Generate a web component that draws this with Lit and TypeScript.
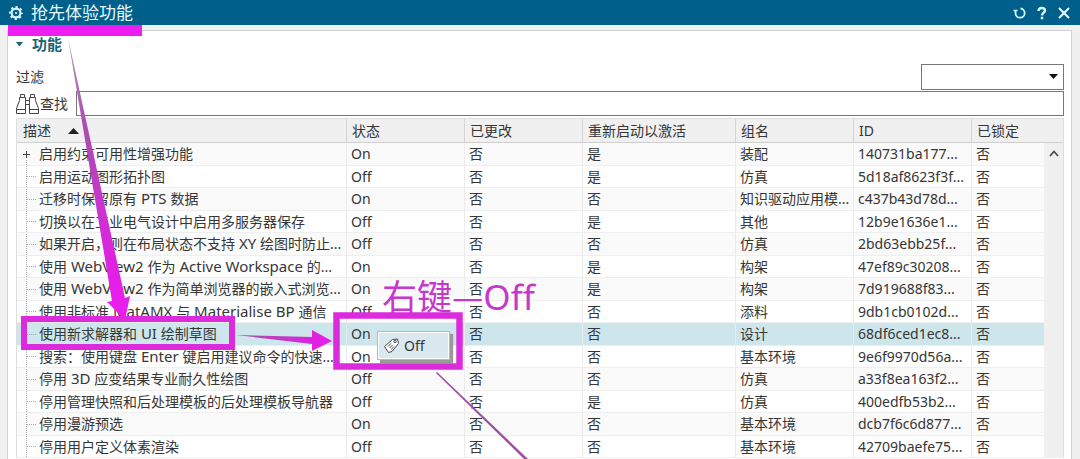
import { LitElement, html, svg, css } from "lit";
import { customElement } from "lit/decorators.js";

type Row = [string, string, string, string, string, string, string];

const HEADERS = ["描述", "状态", "已更改", "重新启动以激活", "组名", "ID", "已锁定"];
const ROWS: Row[] = [
  ["启用约束可用性增强功能", "On", "否", "是", "装配", "140731ba177...", "否"],
  ["启用运动图形拓扑图", "Off", "否", "是", "仿真", "5d18af8623f3f...", "否"],
  ["迁移时保留原有 PTS 数据", "On", "否", "否", "知识驱动应用模...", "c437b43d78d...", "否"],
  ["切换以在工业电气设计中启用多服务器保存", "Off", "否", "是", "其他", "12b9e1636e1...", "否"],
  ["如果开启，则在布局状态不支持 XY 绘图时防止...", "Off", "否", "否", "仿真", "2bd63ebb25f...", "否"],
  ["使用 WebView2 作为 Active Workspace 的...", "On", "否", "是", "构架", "47ef89c30208...", "否"],
  ["使用 WebView2 作为简单浏览器的嵌入式浏览...", "On", "否", "是", "构架", "7d919688f83...", "否"],
  ["使用非标准 MatAMX 与 Materialise BP 通信", "Off", "否", "否", "添料", "9db1cb0102d...", "否"],
  ["使用新求解器和 UI 绘制草图", "On", "否", "否", "设计", "68df6ced1ec8...", "否"],
  ["搜索：使用键盘 Enter 键启用建议命令的快速...", "On", "否", "否", "基本环境", "9e6f9970d56a...", "否"],
  ["停用 3D 应变结果专业耐久性绘图", "Off", "否", "否", "仿真", "a33f8ea163f2...", "否"],
  ["停用管理快照和后处理模板的后处理模板导航器", "Off", "否", "是", "仿真", "400edfb53b2...", "否"],
  ["停用漫游预选", "On", "否", "否", "基本环境", "dcb7f6c6d877...", "否"],
  ["停用用户定义体素渲染", "Off", "否", "否", "基本环境", "42709baefe75...", "否"],
];

// Latin words are set one size up from the Chinese text around them.
const mixed = (text: string) =>
  text.split(/( ?[A-Za-z0-9][A-Za-z0-9 ]*)/).map((part, i) => (i % 2 ? html`<span class="latin">${part}</span>` : part));

@customElement("app-root")
export class AppRoot extends LitElement {
  static styles = css`
    :host {
      display: block;
      position: relative;
      height: 100vh;
      overflow: hidden;
      background: #f0f0f0;
      color: #363636;
      font: 14px/20px "Noto Sans", "Noto Sans CJK SC", sans-serif;
    }
    * { box-sizing: border-box; }
    button { border: 0; padding: 0; background: none; color: inherit; font: inherit; display: flex; align-items: center; }
    .titlebar {
      display: flex;
      align-items: center;
      height: 25px;
      padding: 0 9px 0 8px;
      background: #005f8b;
      color: #e6fbff;
    }
    .title { flex: 1; margin: 0 0 0 7px; font-size: 17px; line-height: 24px; font-weight: 400; }
    .tools { display: flex; gap: 8px; }
    .panel {
      margin: 5px 8px 0 7px;
      min-height: 100%;
      padding: 3px 7px 0 8px;
      background: #fff;
      border: 1px solid #d2d2d2;
      border-bottom: 0;
    }
    .section { height: 20px; gap: 9px; font-weight: 700; font-size: 15px; color: #1b6379; }
    .filter { display: flex; align-items: center; justify-content: space-between; height: 27px; margin-top: 9px; }
    .combo { position: relative; display: flex; width: 143px; height: 26px; }
    select {
      flex: 1; appearance: none; border: 1px solid #777; border-radius: 0; background: #fff; font: inherit;
    }
    .combo svg { position: absolute; right: 6px; top: 10px; pointer-events: none; }
    .find { display: flex; align-items: center; height: 25px; margin-top: 1px; }
    .find label { width: 37px; padding-left: 1px; }
    .find input { flex: 1; height: 25px; border: 1px solid #777; padding: 0 4px; font: inherit; }
    .grid { display: flex; align-items: flex-start; margin-top: 2px; border: 1px solid #dedede; border-width: 1px 1px 0 1px; }
    table { flex: 1; width: 100%; table-layout: fixed; border-collapse: separate; border-spacing: 0; }
    .c-desc { width: 330px; }
    .c-mid { width: 118px; }
    .c-wide { width: 153px; }
    th {
      height: 24px; padding: 0 0 0 5px; text-align: left; font-weight: 400; background: #f0f0f0;
      border-bottom: 1px solid #cfcfcf; border-right: 1px solid #d4d4d4; white-space: nowrap; line-height: 20px;
    }
    th:first-child { padding-left: 6px; }
    th:last-child { border-right: 0; }
    th svg { margin-left: 17px; vertical-align: 2px; }
    td {
      height: 22px; padding: 0 0 0 4px; white-space: nowrap; overflow: hidden; line-height: 20px;
      border-bottom: 1px solid #efefef; border-right: 1px solid #ebebeb;
    }
    td:last-child { border-right: 0; }
    tr:nth-child(odd) td { height: 23px; background: #fafafa; }
    tr.selected:nth-child(odd) td { background: #cde6ec; }
    td.desc { padding: 0; }
    .node { display: flex; align-items: center; height: 21px; }
    .latin { font-size: 15px; line-height: 16px; white-space: pre; }
    .branch { flex: none; width: 22px; height: 21px; }
    .side { flex: none; align-self: stretch; width: 19px; background: #f0f0f0; }
    .corner { height: 24px; border-bottom: 1px solid #cfcfcf; }
    .up { width: 100%; height: 20px; justify-content: center; }
    .menu {
      position: absolute; left: 377px; top: 331px; width: 73px; height: 29px; padding: 1px;
      background: #fff; border: 1px solid #b8b8b8; box-shadow: 3px 3px 1px #999;
    }
    .menu button { width: 100%; height: 100%; padding-left: 4px; gap: 4px; background: #d9e9ef; }
    .marks { position: absolute; left: 0; top: 0; pointer-events: none; }
    .note {
      position: absolute; left: 382px; top: 272px; margin: 0; font-family: "Noto Sans CJK SC", sans-serif;
      font-size: 35px; line-height: 46px; color: #c638cc; white-space: nowrap;
    }
    .note span { font-family: "Noto Sans", sans-serif; }
  `;

  private branch(first: boolean) {
    return html`<svg class="branch" viewBox="0 0 22 21" fill="none" stroke="#aaa" aria-hidden="true">
      <path d=${first ? "M9.5 16v5" : "M9.5 0v21M10 10.5h9"} stroke-dasharray="1 1" />
      ${first ? svg`<path d="M6 10.5h7M9.5 7v7" stroke="#444" />` : ""}
    </svg>`;
  }

  render() {
    return html`
      <header class="titlebar">
        <svg width="16" height="16" viewBox="0 0 16 16" fill="none" stroke="#d8f7fb" aria-hidden="true">
          <circle cx="8" cy="8" r="4.400" stroke-width="2.200" />
          <circle cx="8" cy="8" r="6" stroke-width="1.800" stroke-dasharray="2.300 2.412" stroke-dashoffset="1.150" />
          <circle cx="8" cy="8" r="1.100" fill="#d8f7fb" stroke="none" />
        </svg>
        <h1 class="title">抢先体验功能</h1>
        <div class="tools">
          <button aria-label="重置"><svg width="14" height="14" viewBox="0 0 14 14" fill="none" stroke="#d8f7fb" stroke-width="1.800"><path d="M7.500 2.500a4.600 4.600 0 1 1-5 5V5" /><path d="M.500 4.500h4" stroke-width="1.500" /></svg></button>
          <button aria-label="帮助"><svg width="14" height="14" viewBox="0 0 14 14" fill="none" stroke="#d8f7fb" stroke-width="2.400"><path d="M3.500 5c0-4 6.500-4 6.500-.500C10 7 7 6.500 7 9.500M7 10.800v2.500" /></svg></button>
          <button aria-label="关闭"><svg width="14" height="14" viewBox="0 0 14 14" fill="none" stroke="#e6fbff" stroke-width="2"><path d="m2 2 10 10M12 2 2 12" /></svg></button>
        </div>
      </header>
      <main class="panel">
        <button class="section"><svg width="7" height="5" viewBox="0 0 7 5" fill="#1b6379"><path d="M0 0h7L3.500 4.500z" /></svg>功能</button>
        <div class="filter">
          <label for="filter">过滤</label>
          <span class="combo"><select id="filter"><option></option></select><svg width="9" height="6" viewBox="0 0 9 6"><path d="M0 0h9L4.500 5z" fill="#111" /></svg></span>
        </div>
        <div class="find">
          <svg width="23" height="22" viewBox="0 0 23 22" fill="none" stroke="#444" aria-hidden="true">
            <path d="M4.500 1.500h4v3h1v16h-9v-5l3-8v-3h1zM14.500 1.500h4v3h1v3l3 8v5h-9v-16h1zM.5 16.500h9M13.500 16.500h9M9.500 7.500h4M9.500 11.500h4M4.500 4.500h4M14.500 4.500h4" />
          </svg>
          <label for="find">查找</label><input id="find" type="text" />
        </div>
        <div class="grid">
          <table>
            <colgroup><col class="c-desc" /><col class="c-mid" /><col class="c-mid" /><col class="c-wide" /><col class="c-mid" /><col class="c-mid" /><col /></colgroup>
            <thead><tr>${HEADERS.map((h, i) => html`<th scope="col">${h}${i === 0 ? html`<svg width="11" height="6" viewBox="0 0 11 6"><path d="M0 6h11L5.500 0z" fill="#222" /></svg>` : ""}</th>`)}</tr></thead>
            <tbody>${ROWS.map((r, n) => html`<tr class=${n === 8 ? "selected" : ""}>${r.map((c, i) => i === 0
              ? html`<td class="desc"><div class="node">${this.branch(n === 0)}<span>${mixed(c)}</span></div></td>`
              : html`<td>${c}</td>`)}</tr>`)}</tbody>
          </table>
          <div class="side">
            <div class="corner"></div>
            <button class="up" aria-label="向上滚动"><svg width="10" height="7" viewBox="0 0 10 7" fill="none" stroke="#444" stroke-width="1.600"><path d="M1 6 5 1.500 9 6" /></svg></button>
          </div>
        </div>
      </main>
      <div class="menu"><button>
        <svg width="17" height="17" viewBox="0 0 17 17" fill="#fff" stroke="#444" aria-hidden="true"><path d="m1.500 9.500 8-7 5-.5 1 4.500-6.500 8-3.500 1z" /><circle cx="12" cy="4.500" r="1.200" /><path d="m5 9.500 3-3M6.500 11l3-3M8 12.500l3-3" /></svg>
        Off</button></div>
      <svg class="marks" width="620" height="459" viewBox="0 0 620 459" aria-hidden="true">
        <defs>
          <linearGradient id="a" x1="0" y1="0" x2="0" y2="1"><stop offset="0" stop-color="#b79abb" /><stop offset=".3" stop-color="#a94fae" /><stop offset=".8" stop-color="#df22e2" /><stop offset="1" stop-color="#ed1cf0" /></linearGradient>
          <linearGradient id="b" x1="0" y1="0" x2="1" y2="0"><stop offset="0" stop-color="#9d5aa1" /><stop offset=".8" stop-color="#df22e2" /><stop offset="1" stop-color="#ed1cf0" /></linearGradient>
        </defs>
        <rect x="8" y="25" width="134" height="11" fill="#ed1cf0" />
        <path d="M68 38 L112 301 l-5 1 18 18 5-24 -5 2z" fill="url(#a)" />
        <rect x="24" y="319" width="208" height="28" fill="none" stroke="#db2bdc" stroke-width="6" />
        <path d="m236 335 76 2v-7l20 11-20 10v-7z" fill="url(#b)" />
        <rect x="336.500" y="315.500" width="123" height="51" fill="none" stroke="#db2bdc" stroke-width="6.500" />
        <path d="m436 373 1-1 91 87h-4z" fill="#9d4fa0" />
      </svg>
      <p class="note">右键—<span>Off</span></p>
    `;
  }
}
